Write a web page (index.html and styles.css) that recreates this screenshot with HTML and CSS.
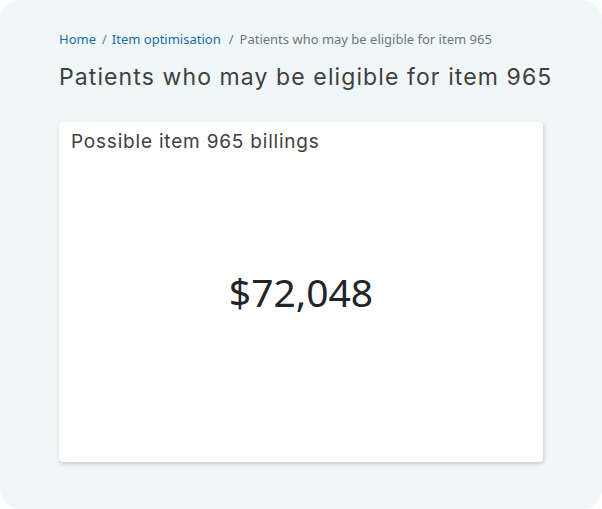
FILE: index.html
```html
<!DOCTYPE html>
<html lang="en">
<head>
<meta charset="utf-8">
<link rel="stylesheet" href="styles.css">
</head>
<body>
<div class="page">
  <nav class="breadcrumb">
    <a class="crumb-link" href="#">Home</a>
    <span class="sep">/</span>
    <a class="crumb-link" href="#">Item optimisation</a>
    <span class="sep sep-last">/</span>
    <span class="crumb-active">Patients who may be eligible for item 965</span>
  </nav>
  <h1 class="title">Patients who may be eligible for item 965</h1>
  <div class="card">
    <div class="card-title">Possible item 965 billings</div>
    <div class="card-value">$72,048</div>
  </div>
</div>
</body>
</html>
```
FILE: styles.css
```css
html, body {
  margin: 0;
  padding: 0;
  background: #ffffff;
}
.page {
  box-sizing: border-box;
  width: 602px;
  height: 509px;
  background: #f0f7f9;
  border-radius: 20px;
  padding: 30px 59px 0 59px;
  display: flex;
  flex-direction: column;
}
.breadcrumb {
  font-family: "Noto Sans", "Open Sans", sans-serif;
  font-size: 13px;
  line-height: 18px;
  display: flex;
  align-items: center;
  white-space: nowrap;
}
.crumb-link {
  color: #1b6ca8;
  text-decoration: none;
}
.sep {
  color: #6c757d;
  padding: 0 5px 0 6px;
}
.sep-last {
  padding: 0 6px 0 8px;
}
.crumb-active {
  color: #6c757d;
}
.title {
  font-family: "Inter", "Lato", sans-serif;
  font-weight: 400;
  font-size: 23px;
  letter-spacing: 1.1px;
  line-height: 32px;
  color: #404040;
  margin: 13px 0 0 0;
  white-space: nowrap;
}
.card {
  margin-top: 29px;
  width: 484px;
  height: 340px;
  background: #ffffff;
  border-radius: 4px;
  box-shadow: 1px 2px 4px rgba(0, 0, 0, 0.18);
  display: flex;
  flex-direction: column;
  box-sizing: border-box;
  padding: 6px 12px 0 12px;
}
.card-title {
  font-family: "Inter", "Lato", sans-serif;
  font-size: 19px;
  letter-spacing: 0.8px;
  line-height: 28px;
  color: #404040;
}
.card-value {
  flex: 1;
  display: flex;
  align-items: center;
  justify-content: center;
  font-family: "Noto Sans", "Open Sans", sans-serif;
  font-size: 39px;
  color: #212529;
  padding-bottom: 36px;
}
```
